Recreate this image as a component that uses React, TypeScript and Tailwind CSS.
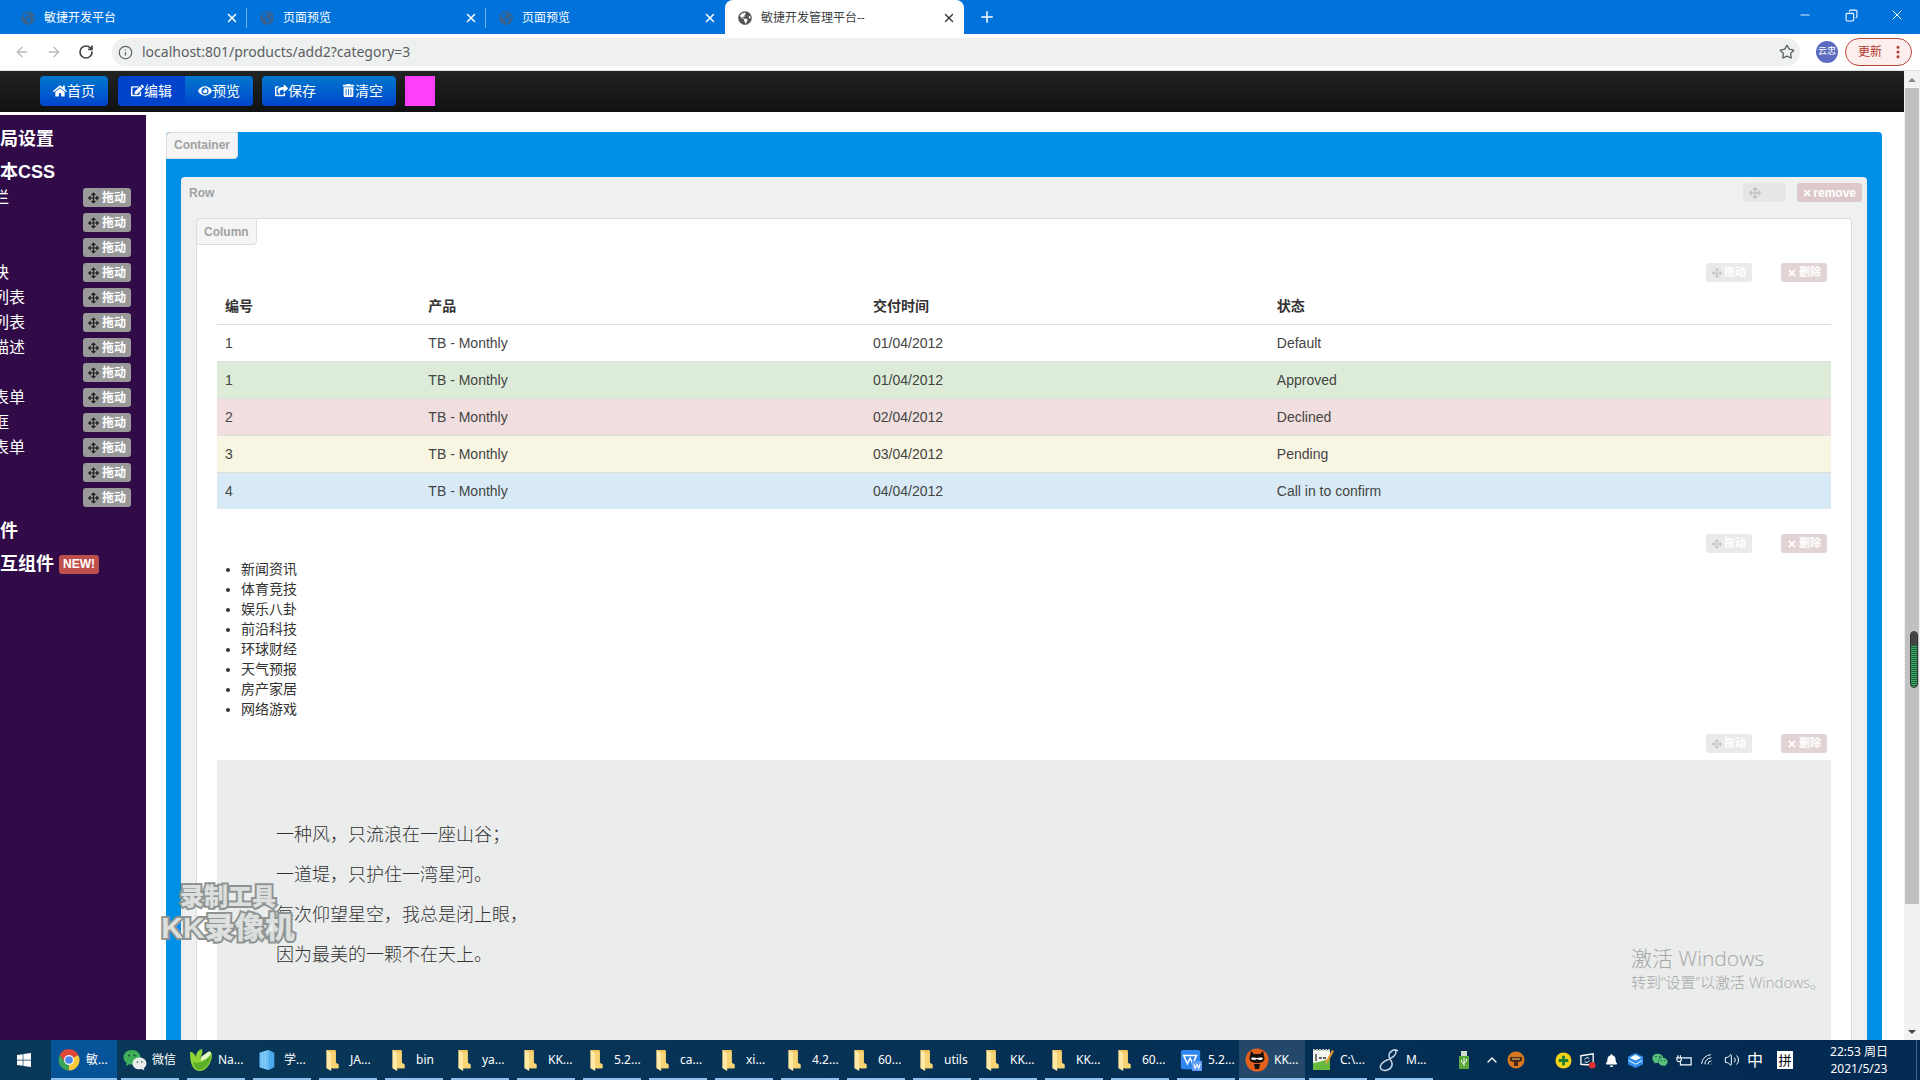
import React from 'react';
import {
  FaHome, FaEdit, FaEye, FaShareSquare, FaTrashAlt, FaArrowsAlt, FaTimes, FaWindows, FaGlobeAmericas, FaWeixin, FaBell,
} from 'react-icons/fa';
import {
  ArrowLeft, ArrowRight, RotateCw, Info, Star, X, Plus, Minus, Copy, ChevronUp, Volume2, Wifi, EllipsisVertical,
} from 'lucide-react';

const TABS = [
  { title: '敏捷开发平台' },
  { title: '页面预览' },
  { title: '页面预览' },
  { title: '敏捷开发管理平台--', active: true },
];

const BASE_CSS_ITEMS = ['栏', '', '', '块', '列表', '列表', '描述', '', '表单', '框', '表单', '', ''];

const ORDERS = [
  { id: 1, product: 'TB - Monthly', date: '01/04/2012', status: 'Default', bg: '' },
  { id: 1, product: 'TB - Monthly', date: '01/04/2012', status: 'Approved', bg: 'bg-[#dcecd8]' },
  { id: 2, product: 'TB - Monthly', date: '02/04/2012', status: 'Declined', bg: 'bg-[#f0dfde]' },
  { id: 3, product: 'TB - Monthly', date: '03/04/2012', status: 'Pending', bg: 'bg-[#f9f5e3]' },
  { id: 4, product: 'TB - Monthly', date: '04/04/2012', status: 'Call in to confirm', bg: 'bg-[#d8eaf6]' },
];

const NEWS = ['新闻资讯', '体育竞技', '娱乐八卦', '前沿科技', '环球财经', '天气预报', '房产家居', '网络游戏'];

const POEM = ['一种风，只流浪在一座山谷；', '一道堤，只护住一湾星河。', '每次仰望星空，我总是闭上眼，', '因为最美的一颗不在天上。'];

const TASKS = [
  { label: '敏...', icon: ChromeIcon, state: 'active' },
  { label: '微信', icon: WechatIcon },
  { label: 'Na...', icon: NavicatIcon },
  { label: '学...', icon: NotebookIcon },
  { label: 'JA...', icon: FolderIcon },
  { label: 'bin', icon: FolderIcon },
  { label: 'ya...', icon: FolderIcon },
  { label: 'KK...', icon: FolderIcon },
  { label: '5.2...', icon: FolderIcon },
  { label: 'ca...', icon: FolderIcon },
  { label: 'xi...', icon: FolderIcon },
  { label: '4.2...', icon: FolderIcon },
  { label: '60...', icon: FolderIcon },
  { label: 'utils', icon: FolderIcon },
  { label: 'KK...', icon: FolderIcon },
  { label: 'KK...', icon: FolderIcon },
  { label: '60...', icon: FolderIcon },
  { label: '5.2...', icon: WpsIcon },
  { label: 'KK...', icon: RecorderIcon, state: 'open' },
  { label: 'C:\\...', icon: NotepadIcon },
  { label: 'M...', icon: DolphinIcon },
];

function ChromeIcon() {
  return (
    <svg viewBox="0 0 24 24" className="w-[22px] h-[22px]">
      <path d="M12 12 L2 6.5 A11.5 11.5 0 0 1 22 6.5 Z" fill="#e0493a" />
      <path d="M12 12 L22 6.5 A11.5 11.5 0 0 1 11.5 23.5 Z" fill="#fbcb3b" />
      <path d="M12 12 L11.5 23.5 A11.5 11.5 0 0 1 2 6.5 Z" fill="#3aa357" />
      <path d="M12 6.8 H22 A11 11 0 0 0 2 6.5 L7.5 14.5 Z" fill="#e0493a" />
      <circle cx="12" cy="12" r="5.4" fill="#fff" />
      <circle cx="12" cy="12" r="4.2" fill="#4a87ee" />
    </svg>
  );
}

function WechatIcon() {
  return (
    <svg viewBox="0 0 24 22" className="w-6 h-[22px]">
      <path d="M9 1C4 1 .5 4.200 .5 8.300c0 2.300 1.200 4.200 3 5.500L3 17l3.200-1.800c1 .3 1.800.3 2.800.3 5 0 8.500-3.200 8.500-7.200S14 1 9 1z" fill="#3fae5a" />
      <path d="M16.500 8.500c-4 0-7 2.600-7 5.900s3 5.900 7 5.900c.8 0 1.600-.1 2.300-.3l2.600 1.400-.6-2.300c1.600-1 2.600-2.700 2.600-4.700 0-3.300-3-5.900-6.900-5.900z" fill="#e9eeec" />
      <g fill="#17452a"><circle cx="6" cy="6.500" r="1" /><circle cx="11.500" cy="6.500" r="1" /><circle cx="14.500" cy="13" r=".8" /><circle cx="18.800" cy="13" r=".8" /></g>
    </svg>
  );
}

function NavicatIcon() {
  return (
    <svg viewBox="0 0 24 24" className="w-6 h-6">
      <path d="M1 4c3 0 5 2 6 5 0-4 2-7 6-8 1 3 0 6-2 9l8-6c3-1 4 1 4 4-1 8-6 15-12 15C5 23 1 18 1 4z" fill="#8fd336" />
      <path d="M4 14c6 3 13-1 18-8 0 8-5 15-11 16-4 0-6-3-7-8z" fill="#5cae2b" />
      <path d="M12 9l7-5c2-1 3 0 3 2-3 4-6 6-10 7z" fill="#e4f7c7" />
    </svg>
  );
}

function NotebookIcon() {
  return (
    <svg viewBox="0 0 20 24" className="w-5 h-[22px]">
      <path d="M2 4l10-3 6 3v16l-6 3-10-3z" fill="#4ba8ec" />
      <path d="M2 4l10-3v22L2 20z" fill="#6cbef5" />
      <path d="M5 3v18M8 2v20" stroke="#9bd5fb" strokeWidth="1" />
    </svg>
  );
}

function FolderIcon() {
  return (
    <svg viewBox="0 0 16 24" className="w-4 h-[22px]">
      <path d="M1 1h10v14l3 2v4H1z" fill="#f2c55c" />
      <path d="M1 1l5 3v20l-5-3z" fill="#ffe9a6" />
      <path d="M6 4l5-1v12l3 2v4H6z" fill="#f7d577" />
    </svg>
  );
}

function WpsIcon() {
  return (
    <svg viewBox="0 0 24 24" className="w-[22px] h-[22px]">
      <rect x="1" y="1" width="21" height="21" rx="2" fill="#2f86ee" />
      <path d="M4 7h14l-4 9-3-6-3 6z" fill="none" stroke="#fff" strokeWidth="1.6" />
      <rect x="13" y="13" width="11" height="11" fill="#5f9df3" />
      <path d="M15 16l1.500 5 2-4 2 4 1.500-5" fill="none" stroke="#fff" strokeWidth="1.200" />
    </svg>
  );
}

function RecorderIcon() {
  return (
    <svg viewBox="0 0 24 24" className="w-6 h-6">
      <circle cx="12" cy="12" r="11.500" fill="#e2601c" />
      <path d="M5 8l1-5 3 3h6l3-3 1 5c2 5-2 7-7 7s-9-2-7-7z" fill="#17110e" />
      <path d="M6 10c3-1 4 0 6 0 2 0 3-1 6 0-1 3-4 2-6 1-2 1-5 2-6-1z" fill="#fff" />
      <path d="M9 16h6l-1 5h-4z" fill="#17110e" />
    </svg>
  );
}

function NotepadIcon() {
  return (
    <svg viewBox="0 0 22 24" className="w-[22px] h-6">
      <path d="M1 2h17v20H1z" fill="#f3f6ee" />
      <path d="M1 15c6-1 11-2 17-5v12H1z" fill="#66b93c" />
      <path d="M4 6v7M7 10h3M11 10h3" stroke="#333" strokeWidth="1.300" />
      <path d="M20 2l-6 11-1 4 3-3L22 3z" fill="#e89a35" />
      <path d="M1 2h17" stroke="#b9c4b3" strokeWidth="2" strokeDasharray="2 1" />
    </svg>
  );
}

function DolphinIcon() {
  return (
    <svg viewBox="0 0 22 24" className="w-[22px] h-6" fill="none" stroke="#c4d6e6" strokeWidth="1.500">
      <path d="M20 3c-3-3-9 0-9 5 0 4 4 5 3 9-1 5-8 7-11 4-2-3 1-7 6-9s9-5 9-8c0-2-3-3-5 0" />
    </svg>
  );
}

function BrowserTabs() {
  return (
    <div className="flex h-[34px] shrink-0 bg-[#0072db] font-['Noto_Sans','Noto_Sans_CJK_SC',sans-serif] text-xs text-white">
      <div className="flex pl-2">
        {TABS.map((tab, idx) => (
          <div
            key={idx}
            className={`flex items-center w-[239px] h-full pt-px pl-[13px] pr-2 ${tab.active ? 'bg-white text-[#3c4043] rounded-t-lg' : idx < 2 ? 'relative after:absolute after:right-0 after:top-2 after:h-5 after:w-px after:bg-[#6fb0ee]' : ''}`}
          >
            <FaGlobeAmericas className={`w-[14px] h-[14px] mr-[9px] ${tab.active ? 'text-[#555]' : 'text-[#38628c]'}`} />
            <span className="flex-1 whitespace-nowrap">{tab.title}</span>
            <button aria-label="关闭标签页"><X className="w-[14px] h-[14px]" strokeWidth={2.5} /></button>
          </div>
        ))}
        <button aria-label="新标签页" className="ml-[14px]"><Plus className="w-[18px] h-[18px]" /></button>
      </div>
      <div className="flex ml-auto h-[30px]">
        <button aria-label="最小化" className="flex items-center justify-center w-[46px]"><Minus className="w-[14px] h-[14px]" strokeWidth={1.5} /></button>
        <button aria-label="还原" className="flex items-center justify-center w-[46px]">
          <Copy className="w-[13px] h-[13px] -scale-x-100" strokeWidth={2} />
        </button>
        <button aria-label="关闭" className="flex items-center justify-center w-[46px]"><X className="w-4 h-4" strokeWidth={1.5} /></button>
      </div>
    </div>
  );
}

function AddressBar() {
  return (
    <div className="flex items-center h-[37px] shrink-0 bg-white border-b border-[#dfe3e0] pl-[14px] pr-2 text-[#5f6368]">
      <button aria-label="后退" className="mr-4 text-[#b9bcbe]"><ArrowLeft className="w-4 h-4" /></button>
      <button aria-label="前进" className="mr-4 text-[#b9bcbe]"><ArrowRight className="w-4 h-4" /></button>
      <button aria-label="重新加载" className="mr-[18px] text-[#444]"><RotateCw className="w-4 h-4" strokeWidth={2.5} /></button>
      <div className="flex flex-1 items-center h-7 rounded-full bg-[#eff1f1] pl-[6px] pr-[5px]">
        <Info className="w-[15px] h-[15px]" />
        <input
          aria-label="地址"
          readOnly
          defaultValue="localhost:801/products/add2?category=3"
          className="flex-1 ml-[9px] bg-transparent outline-none font-['Noto_Sans',sans-serif] text-sm text-[#5b5e61]"
        />
        <button aria-label="收藏"><Star className="w-4 h-4" /></button>
      </div>
      <div className="flex items-center justify-center w-[22px] h-[22px] ml-4 rounded-full bg-[#5c6bc0] text-[9px] text-white">云忠</div>
      <button className="flex items-center h-7 ml-[7px] pl-3 pr-[5px] gap-2 rounded-full border border-[#b8443c] bg-[#fbeeec] text-xs text-[#b3362e]">
        更新<EllipsisVertical className="w-4 h-4" strokeWidth={2.5} />
      </button>
    </div>
  );
}

function Toolbar() {
  const btn = 'flex items-center h-[30px] px-[13px] pb-px text-sm text-white whitespace-nowrap';
  const blue = 'bg-gradient-to-b from-[#0077cc] to-[#0044cc]';
  return (
    <div className="flex items-start h-[41px] shrink-0 pl-10 pt-[5px] bg-gradient-to-b from-[#222423] to-[#101211]">
      <button className={`${btn} ${blue} rounded mr-[10px]`}><FaHome className="w-[14px] h-[14px]" />首页</button>
      <div className="flex rounded overflow-hidden mr-[9px]">
        <button className={`${btn} bg-[#0044cc]`}><FaEdit className="w-[13px] h-[13px]" />编辑</button>
        <button className={`${btn} ${blue}`}><FaEye className="w-[14px] h-[14px]" />预览</button>
      </div>
      <div className="flex rounded overflow-hidden mr-[9px]">
        <button className={`${btn} ${blue}`}><FaShareSquare className="w-[13px] h-[13px]" />保存</button>
        <button className={`${btn} ${blue}`}><FaTrashAlt className="w-[13px] h-[13px]" />清空</button>
      </div>
      <button aria-label="主题颜色" className="w-[30px] h-[30px] bg-[#ff40fb]" />
    </div>
  );
}

function Sidebar() {
  return (
    <aside className="w-[146px] shrink-0 mt-[3px] pt-2 bg-[#300b48] text-white overflow-hidden">
      <h2 className="h-8 leading-8 text-lg font-bold whitespace-nowrap">局设置</h2>
      <h2 className="h-8 leading-[34px] text-lg font-bold whitespace-nowrap">本CSS</h2>
      <ul className="-ml-[7px] pr-[15px] -mt-0.5">
        {BASE_CSS_ITEMS.map((item, idx) => (
          <li key={idx} className="flex items-center justify-between h-[25px]">
            <span className="text-base whitespace-nowrap">{item}</span>
            <button className="flex items-center gap-[3px] h-[19px] ml-auto px-[5px] rounded-[3px] bg-[#999] text-xs font-bold whitespace-nowrap">
              <FaArrowsAlt className="w-[11px] h-3 text-[#222]" />拖动
            </button>
          </li>
        ))}
      </ul>
      <h2 className="h-8 mt-1 leading-[34px] text-lg font-bold">件</h2>
      <h2 className="flex items-center gap-[5px] h-8 pt-1 text-lg font-bold whitespace-nowrap">
        互组件
        <span className="px-1 h-[19px] leading-[19px] rounded-[3px] bg-[#bf4f4b] text-xs">NEW!</span>
      </h2>
    </aside>
  );
}

function BlockTools({ className }: { className: string }) {
  return (
    <div className={`flex justify-end gap-[29px] h-[19px] pr-1 text-[11px] font-bold text-white ${className}`}>
      <button className="flex items-center gap-0.5 w-[46px] px-1.5 rounded-[3px] bg-[#e9ebea] whitespace-nowrap">
        <FaArrowsAlt className="w-[10px] h-[10px] shrink-0 text-[#c2c5c3]" />拖动
      </button>
      <button className="flex items-center gap-0.5 w-[46px] px-1.5 rounded-[3px] bg-[#e2d4d5] whitespace-nowrap">
        <FaTimes className="w-[10px] h-[10px] shrink-0" />删除
      </button>
    </div>
  );
}

function OrdersTable() {
  return (
    <table className="w-full table-fixed text-sm leading-5 text-[#444]">
      <thead>
        <tr className="text-left text-[#333]">
          <th className="w-[12.6%] p-2">编号</th>
          <th className="w-[27.55%] p-2">产品</th>
          <th className="w-[25.02%] p-2">交付时间</th>
          <th className="p-2">状态</th>
        </tr>
      </thead>
      <tbody>
        {ORDERS.map((order, idx) => (
          <tr key={idx} className={`border-t border-[#dddfdc] ${order.bg}`}>
            <td className="p-2">{order.id}</td>
            <td className="p-2">{order.product}</td>
            <td className="p-2">{order.date}</td>
            <td className="p-2">{order.status}</td>
          </tr>
        ))}
      </tbody>
    </table>
  );
}

function Canvas() {
  const label = 'inline-block text-xs font-bold text-[#a0a2a1]';
  return (
    <main className="flex-1 min-w-0 pl-5 pr-[22px] pt-5 bg-white">
      <div className="rounded-t bg-[#008fe6] px-[15px]">
        <div className="-ml-[15px] h-[45px]">
          <span className={`${label} h-[27px] px-[7px] leading-[25px] rounded-tl rounded-br border border-[#ddd] bg-[#f5f5f5]`}>Container</span>
        </div>
        <div className="rounded-t px-[15px] bg-[#eff0f0]">
          <div className="flex items-center h-[41px] -mx-[7px] pb-[10px]">
            <span className={label}>Row</span>
            <div className="flex gap-[11px] ml-auto -mr-[3px] h-[19px] text-xs font-bold text-white">
              <button aria-label="拖动" className="flex items-center w-[43px] px-1.5 rounded-[3px] bg-[#e5e6e5]">
                <FaArrowsAlt className="w-3 h-3 shrink-0 text-[#c0c3c1]" />
              </button>
              <button className="flex items-center gap-0.5 w-[65px] px-1.5 rounded-[3px] bg-[#ddc8cc]">
                <FaTimes className="w-[10px] h-[10px]" />remove
              </button>
            </div>
          </div>
          <div className="border border-[#d9dbda] bg-white rounded-t">
            <div className="h-[26px] -ml-px -mt-px">
              <span className={`${label} h-[27px] px-[7px] leading-[26px] rounded-tl rounded-br border border-[#ddd] bg-[#f5f5f5]`}>Column</span>
            </div>
            <div className="px-5">
              <BlockTools className="mt-[19px] mb-[6px]" />
              <OrdersTable />
              <BlockTools className="mt-[25px] mb-[6px]" />
              <ul className="list-disc pl-6 text-sm leading-5 text-[#333]">
                {NEWS.map((item) => <li key={item}>{item}</li>)}
              </ul>
              <BlockTools className="mt-[15px] mb-[7px]" />
              <div className="h-[400px] pt-[55px] pl-[59px] bg-[#ebecec] text-lg font-light text-[#333]">
                {POEM.map((line) => <p key={line} className="leading-10">{line}</p>)}
              </div>
            </div>
          </div>
        </div>
      </div>
    </main>
  );
}

function Scrollbar() {
  return (
    <div className="flex flex-col items-center w-4 shrink-0 bg-[#f1f1f1]">
      <div className="flex items-center justify-center h-[17px]">
        <svg viewBox="0 0 8 4" className="w-2 h-1"><path d="M0 4l4-4 4 4z" fill="#8a8a8a" /></svg>
      </div>
      <div className="w-[14px] grow-[816] basis-0 bg-[#c1c1c1]" />
      <div className="grow-[119] basis-0" />
      <div className="flex items-center justify-center h-[17px]">
        <svg viewBox="0 0 8 4" className="w-2 h-1"><path d="M0 0l4 4 4-4z" fill="#444" /></svg>
      </div>
    </div>
  );
}

function Tray() {
  return (
    <div className="flex items-center ml-auto text-white">
      <svg viewBox="0 0 12 20" className="w-3 h-5 mr-[10px]">
        <path d="M3 1h6v5H3z" fill="#d6dcd2" /><path d="M1 6h10v13H1z" fill="#5aa83e" />
        <path d="M6 8v8M3.500 10v2l2.500 2M8.500 9v2L6 13" stroke="#fff" fill="none" />
      </svg>
      <div className="flex items-center justify-center w-6"><ChevronUp className="w-4 h-4" /></div>
      <div className="flex items-center justify-center w-6 mr-6">
        <svg viewBox="0 0 18 18" className="w-[18px] h-[18px]">
          <circle cx="9" cy="9" r="8.500" fill="#d97820" />
          <path d="M3 6h12v3c0 3-12 3-12 0zM7 11h4v4H7z" fill="#4a2a14" /><path d="M5 8h8" stroke="#f5c98d" />
        </svg>
      </div>
      <div className="flex items-center justify-center w-6">
        <svg viewBox="0 0 18 18" className="w-[17px] h-[17px]">
          <circle cx="9" cy="9" r="8.500" fill="#f3d117" /><path d="M9 4v10M4 9h10" stroke="#1d7f36" strokeWidth="3" />
        </svg>
      </div>
      <div className="flex items-center justify-center w-6">
        <svg viewBox="0 0 18 18" className="w-[17px] h-[17px]">
          <path d="M2 4l13-2v12l-13-1z" fill="none" stroke="#fff" strokeWidth="1.400" />
          <path d="M6 8a3 3 0 0 1 5-1M11 9a3 3 0 0 1-5 1" fill="none" stroke="#fff" /><circle cx="14" cy="14" r="3.500" fill="#e03131" />
        </svg>
      </div>
      <div className="flex items-center justify-center w-6"><FaBell className="w-[13px] h-[13px]" /></div>
      <div className="flex items-center justify-center w-6">
        <svg viewBox="0 0 18 18" className="w-[17px] h-[17px]">
          <path d="M9 1l8 4v8l-8 4-8-4V5z" fill="#2d8cf0" /><path d="M9 3l6 3-6 3-6-3z" fill="#fff" /><path d="M2 9l7 4 7-4" stroke="#fff" fill="none" />
        </svg>
      </div>
      <div className="flex items-center justify-center w-6"><FaWeixin className="w-4 h-4 text-[#58c078]" /></div>
      <div className="flex items-center justify-center w-6">
        <svg viewBox="0 0 18 14" className="w-4 h-[13px]" fill="none" stroke="#fff" strokeWidth="1.300">
          <path d="M7 4h10v8H5V9M1 4h5v2c0 3-5 3-5 0zM2 1v3M5 1v3" />
        </svg>
      </div>
      <div className="flex items-center justify-center w-6"><Wifi className="w-[15px] h-[15px] -rotate-45" strokeWidth={1.5} /></div>
      <div className="flex items-center justify-center w-6"><Volume2 className="w-4 h-4" strokeWidth={1.5} /></div>
      <span className="ml-[3px] text-base">中</span>
      <span className="ml-[14px] mr-[9px] w-4 h-[18px] leading-[18px] bg-white text-center text-[13px] text-black">拼</span>
      <div className="w-[114px] text-center text-xs leading-[17px]">
        <div>22:53 周日</div>
        <div>2021/5/23</div>
      </div>
      <div className="w-1 h-10 border-l border-[#486783]" />
    </div>
  );
}

function Taskbar() {
  return (
    <footer className="flex h-10 shrink-0 bg-gradient-to-r from-[#0a3858] to-[#032a52] font-['Noto_Sans','Noto_Sans_CJK_SC',sans-serif] text-xs text-white">
      <button aria-label="开始" className="flex items-center justify-center w-12"><FaWindows className="w-4 h-4" /></button>
      <div className="flex pl-[3px]">
        {TASKS.map((task, idx) => (
          <button
            key={idx}
            className={`flex items-center w-[66px] h-10 ${task.state === 'active' ? 'bg-[#07539a]' : task.state === 'open' ? 'bg-[#234869]' : ''}`}
          >
            <span
              className={`flex items-center h-full w-full pt-0.5 border-b-2 border-[#8fc0ee] whitespace-nowrap ${task.state ? 'pl-1.5' : 'mx-1 pl-0.5'}`}
            >
              <span className="flex items-center justify-center w-6 mr-[5px] shrink-0"><task.icon /></span>
              {task.label}
            </span>
          </button>
        ))}
      </div>
      <Tray />
    </footer>
  );
}

function Overlays() {
  return (
    <>
      <div className="absolute left-[161px] top-[882px] w-[134px] text-center font-black text-[#f2f4f3]/80 [-webkit-text-stroke:4px_#8f9492] [paint-order:stroke_fill]">
        <div className="text-2xl leading-[30px]">录制工具</div>
        <div className="text-[30px] leading-8 whitespace-nowrap">KK录像机</div>
      </div>
      <div className="absolute right-[95px] bottom-[88px] w-[194px] font-['Open_Sans','Noto_Sans_CJK_SC',sans-serif] font-light text-[#a4a7a5] whitespace-nowrap">
        <div className="text-[21px] leading-7">激活 Windows</div>
        <div className="text-[15px] leading-5">转到“设置”以激活 Windows。</div>
      </div>
      <div className="absolute right-0.5 top-[631px] w-2 h-[57px] rounded-full border border-[#333] bg-[repeating-linear-gradient(#3fae6a_0_1px,#1f5c3a_1px_2px)] overflow-hidden">
        <div className="h-[13px] bg-[#444]" />
      </div>
    </>
  );
}

export default function App() {
  return (
    <div className="relative flex flex-col h-screen overflow-hidden bg-white font-['Liberation_Sans','Noto_Sans_CJK_SC',sans-serif]">
      <BrowserTabs />
      <AddressBar />
      <div className="flex flex-1 min-h-0">
        <div className="flex flex-col flex-1 min-w-0 overflow-hidden">
          <Toolbar />
          <div className="flex flex-1 min-h-0 overflow-hidden">
            <Sidebar />
            <Canvas />
          </div>
        </div>
        <Scrollbar />
      </div>
      <Taskbar />
      <Overlays />
    </div>
  );
}
